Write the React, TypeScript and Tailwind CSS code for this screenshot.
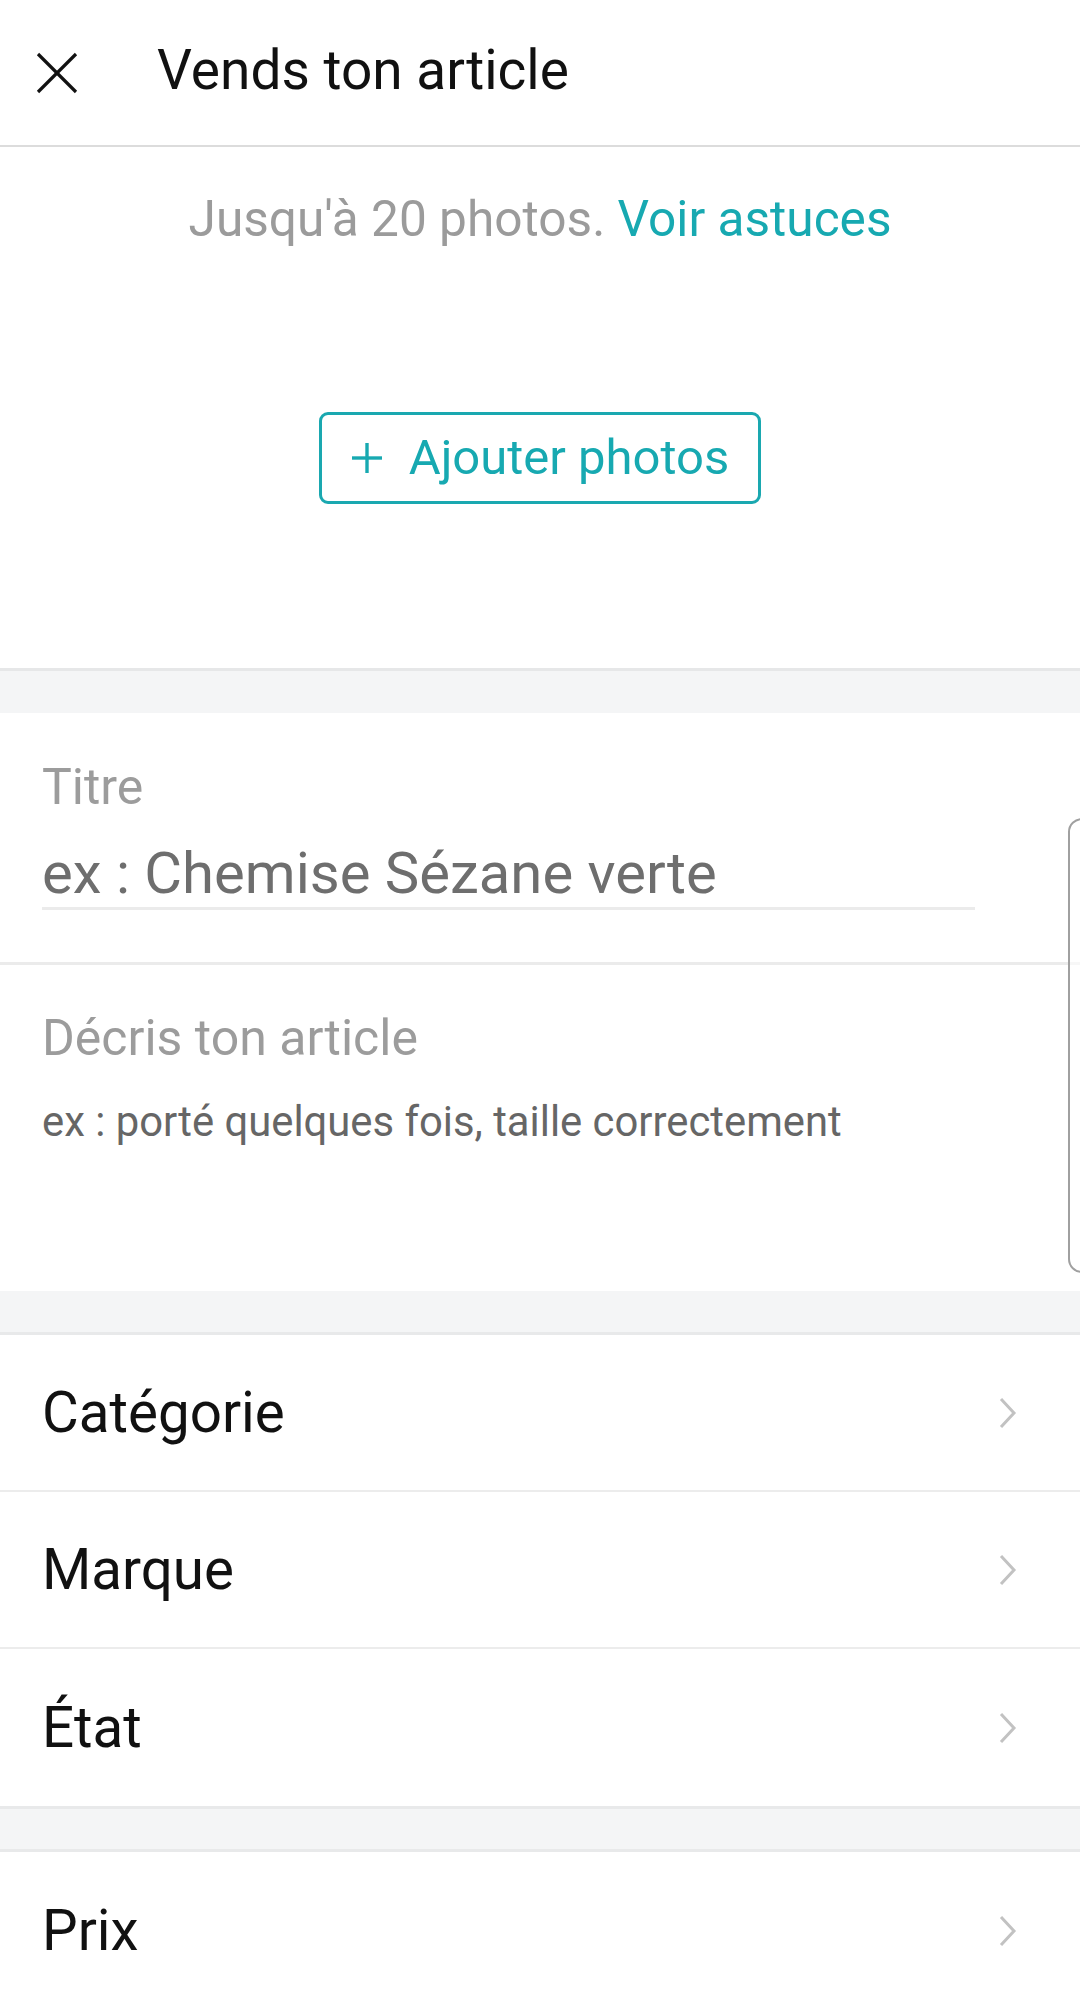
import React from "react";

function Chevron() {
  return (
    <svg width="20" height="32" viewBox="0 0 20 32" fill="none" className="shrink-0">
      <polyline points="3,2 16,16 3,30" stroke="#c2c2c2" strokeWidth="3" fill="none" />
    </svg>
  );
}

function Row({ label, last }: { label: string; last?: boolean }) {
  return (
    <div
      className={
        "flex h-[157px] items-center justify-between bg-white pl-[42px] pr-[62px] " +
        (last ? "" : "border-b-2 border-[#ececec]")
      }
    >
      <span className="text-[56.5px] leading-[66px] text-[#111111]">{label}</span>
      <Chevron />
    </div>
  );
}

export default function App() {
  return (
    <div
      className="relative w-[1080px] h-[2005px] overflow-hidden bg-white"
      style={{ fontFamily: "Roboto, 'Noto Sans', sans-serif" }}
    >
      {/* Header */}
      <div className="flex h-[147px] items-center border-b-2 border-[#dcdcdc] bg-white">
        <div className="ml-[36px] flex h-[42px] w-[42px] items-center justify-center">
          <svg width="42" height="42" viewBox="0 0 42 42" fill="none">
            <line x1="2" y1="2" x2="40" y2="40" stroke="#111" strokeWidth="3.2" />
            <line x1="40" y1="2" x2="2" y2="40" stroke="#111" strokeWidth="3.2" />
          </svg>
        </div>
        <span className="ml-[79px] mt-[-5px] text-[55px] leading-[64px] text-[#111111]">Vends ton article</span>
      </div>

      {/* Photos */}
      <div className="flex h-[521px] flex-col items-center bg-white pt-[43px]">
        <p className="text-[49.6px] leading-[58px] text-[#9b9b9b]">
          Jusqu'à 20 photos. <span className="text-[#17a9b1]">Voir astuces</span>
        </p>
        <button className="mt-[164px] flex h-[92px] w-[442px] items-center justify-center gap-[26px] rounded-[9px] border-[3px] border-[#1aa8b0] bg-white">
          <svg width="32" height="32" viewBox="0 0 32 32" fill="none">
            <line x1="16" y1="1" x2="16" y2="31" stroke="#17a9b1" strokeWidth="3.4" />
            <line x1="1" y1="16" x2="31" y2="16" stroke="#17a9b1" strokeWidth="3.4" />
          </svg>
          <span className="text-[49px] leading-[58px] text-[#17a9b1]">Ajouter photos</span>
        </button>
      </div>

      {/* band */}
      <div className="h-[45px] border-t-[3px] border-[#e6e7e8] bg-[#f4f5f6]" />

      {/* Titre */}
      <div className="h-[249px] bg-white pl-[42px] pr-[105px] pt-[46px]">
        <p className="text-[50px] leading-[56px] text-[#9c9c9c]">Titre</p>
        <p className="mt-[24px] text-[58px] leading-[68px] text-[#6e6e6e]">ex : Chemise Sézane verte</p>
        <div className="mt-[0px] h-[3px] bg-[#ebebeb]" />
      </div>
      <div className="h-[3px] bg-[#ebebeb]" />

      {/* Description */}
      <div className="h-[326px] bg-white pl-[42px] pt-[45px]">
        <p className="text-[50px] leading-[56px] text-[#9c9c9c]">Décris ton article</p>
        <p className="mt-[31px] text-[41.8px] leading-[50px] text-[#666666]">
          ex : porté quelques fois, taille correctement
        </p>
      </div>

      {/* band */}
      <div className="h-[44px] border-b-[3px] border-[#e8e9ea] bg-[#f4f5f6]" />

      <Row label="Catégorie" />
      <Row label="Marque" />
      <Row label="État" last />

      {/* band */}
      <div className="h-[46px] border-y-[3px] border-[#e8e9ea] bg-[#f4f5f6]" />

      <Row label="Prix" last />

      {/* edge handle overlay */}
      <div className="absolute left-[1068px] top-[818px] h-[455px] w-[30px] rounded-l-[14px] border-2 border-[#a0a0a0] bg-white/60" />
    </div>
  );
}
